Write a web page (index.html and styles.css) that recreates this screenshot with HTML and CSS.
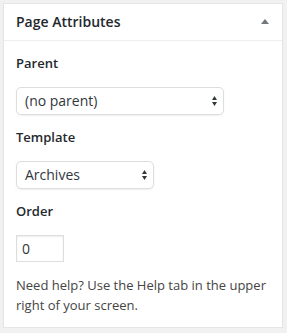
FILE: index.html
```html
<!DOCTYPE html>
<html lang="en">
<head>
    <meta charset="UTF-8">
    <title>Page Attributes</title>
    <link rel="stylesheet" href="styles.css">
</head>
<body>
    <div class="postbox">
        <h2 class="hndle">
            <span>Page Attributes</span>
            <svg class="toggle" width="8" height="5" viewBox="0 0 8 5"><polygon points="4,0 8,5 0,5" fill="#72777c"/></svg>
        </h2>
        <div class="inside">
            <p class="label">Parent</p>
            <div class="select select-wide">
                <span>(no parent)</span>
                <svg class="arrows" width="5" height="10" viewBox="0 0 5 10"><polygon points="2.5,0 5,4 0,4" fill="#32373c"/><polygon points="0,6 5,6 2.5,10" fill="#32373c"/></svg>
            </div>
            <p class="label">Template</p>
            <div class="select select-narrow">
                <span>Archives</span>
                <svg class="arrows" width="5" height="10" viewBox="0 0 5 10"><polygon points="2.5,0 5,4 0,4" fill="#32373c"/><polygon points="0,6 5,6 2.5,10" fill="#32373c"/></svg>
            </div>
            <p class="label">Order</p>
            <div class="order-input">0</div>
            <p class="help">Need help? Use the Help tab in the upper right of your screen.</p>
        </div>
    </div>
</body>
</html>
```

FILE: styles.css
```css
/* Page */
body {
    margin: 0;
    padding: 3px 4px 0 3px;
    background: #f1f1f1;
    font-family: "Open Sans", "Liberation Sans", sans-serif;
    color: #444;
}

/* Meta box */
.postbox {
    background: #fff;
    border: 1px solid #e5e5e5;
    box-shadow: 0 1px 1px rgba(0, 0, 0, 0.04);
}

.hndle {
    display: flex;
    justify-content: space-between;
    align-items: center;
    margin: 0;
    padding: 8px 13px 8px 12px;
    border-bottom: 1px solid #eee;
    font-size: 14px;
    font-weight: 600;
    line-height: 1.4;
    color: #23282d;
}

.inside {
    padding: 0 12px 12px;
    margin-top: 11px;
    font-size: 13px;
    line-height: 1.4;
}

.label {
    margin: 13px 0 15px;
    font-weight: 600;
    color: #23282d;
}

/* Select boxes */
.select {
    display: flex;
    justify-content: space-between;
    align-items: center;
    box-sizing: border-box;
    height: 28px;
    padding: 0 6px 0 8px;
    border: 1px solid #ddd;
    border-radius: 5px;
    box-shadow: 0 1px 2px rgba(0, 0, 0, 0.07);
    font-size: 14px;
    color: #32373c;
}

.select-wide {
    width: 208px;
}

.select-narrow {
    width: 138px;
}

/* Order field */
.order-input {
    box-sizing: border-box;
    width: 48px;
    height: 27px;
    padding: 0 5px;
    border: 1px solid #ddd;
    box-shadow: inset 0 1px 2px rgba(0, 0, 0, 0.07);
    font-size: 14px;
    line-height: 25px;
    color: #32373c;
}

.help {
    margin: 13px 0 0;
    line-height: 20px;
}
```
